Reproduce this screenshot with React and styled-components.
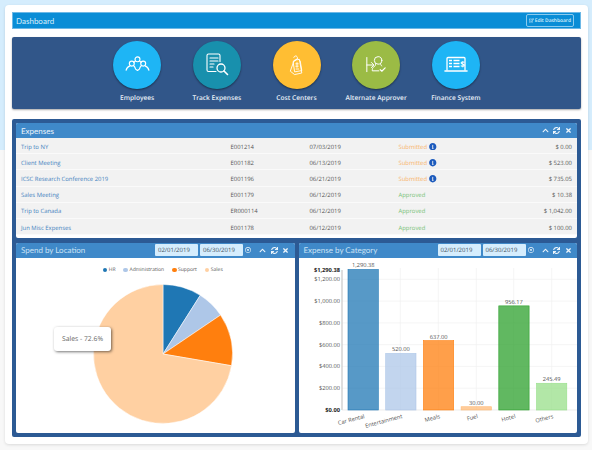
import React from 'react';
import styled, { createGlobalStyle } from 'styled-components';
import { FaChevronUp, FaSync, FaTimes, FaInfoCircle, FaRegEdit, FaRegDotCircle } from 'react-icons/fa';

const GlobalStyle = createGlobalStyle`
  html, body {
    margin: 0;
    padding: 0;
  }
  body {
    font-family: "Open Sans", "Liberation Sans", sans-serif;
    text-rendering: geometricPrecision;
    background: linear-gradient(to bottom, #d5edfd 0, #d5edfd 150px, #f8f8f8 150px);
    height: 450px;
    overflow: hidden;
  }
`;

const Page = styled.div`
  padding: 5px 4px 6px 5px;
  height: 450px;
  box-sizing: border-box;
`;

const Card = styled.div`
  background: #fff;
  border-radius: 4px;
  height: 439px;
  box-sizing: border-box;
  padding: 7px;
  box-shadow: 0 1px 3px rgba(0, 0, 0, 0.12);
`;

const TopBar = styled.div`
  display: flex;
  align-items: center;
  justify-content: space-between;
  height: 17px;
  box-sizing: border-box;
  padding: 0 6px 0 3px;
  background: #0a8dd6;
  border: 1px solid #6db8e6;
  color: #d6eefb;
  font-family: Lato, "Open Sans", sans-serif;
  font-size: 8px;
`;

const EditButton = styled.div`
  display: flex;
  align-items: center;
  gap: 1px;
  height: 11px;
  padding: 0 2px;
  border: 1px solid #8ccbee;
  border-radius: 2px;
  color: #dff2fc;
  font-family: "Open Sans", sans-serif;
  font-size: 4.9px;
  font-weight: 600;
`;

const ShortcutPanel = styled.div`
  display: flex;
  justify-content: center;
  height: 72px;
  margin: 8px 0 10px;
  padding-top: 4px;
  box-sizing: border-box;
  background: #315689;
  border-radius: 2px;
  box-shadow: 0 1px 2px rgba(0, 0, 0, 0.35);
`;

const Shortcut = styled.div`
  display: flex;
  flex-direction: column;
  align-items: center;
  width: 79.7px;
`;

const Circle = styled.div`
  display: flex;
  align-items: center;
  justify-content: center;
  width: 48px;
  height: 48px;
  border-radius: 50%;
  background: ${p => p.$color};
  box-shadow: 0 1px 2px rgba(0, 0, 0, 0.45);
`;

const ShortcutLabel = styled.div`
  margin-top: 4px;
  color: #e8eff7;
  font-size: 6.6px;
  font-weight: 600;
  white-space: nowrap;
`;

const Board = styled.div`
  display: flex;
  flex-direction: column;
  gap: 5px;
  height: 318px;
  box-sizing: border-box;
  padding: 4px;
  background: #2c5a94;
  border-radius: 2px;
`;

const Panel = styled.div`
  display: flex;
  flex-direction: column;
  flex: ${p => (p.$grow ? 1 : 'none')};
  min-width: 0;
  background: #fff;
  border-radius: 2px;
  overflow: hidden;
`;

const PanelHead = styled.div`
  display: flex;
  align-items: center;
  height: 15px;
  flex: none;
  padding: 0 5.5px 0 5px;
  background: #3f89c9;
  color: ${p => (p.$bright ? '#eaf4fb' : '#c9e2f5')};
  font-family: Lato, "Open Sans", sans-serif;
  font-size: 8px;
`;

const PanelTitle = styled.div`
  flex: 1;
  white-space: nowrap;
`;

const DateBox = styled.div`
  width: 43px;
  height: 12px;
  line-height: 12px;
  margin-right: 2px;
  padding-left: 3px;
  box-sizing: border-box;
  background: #d5edfd;
  color: #44525e;
  font-family: "Open Sans", sans-serif;
  font-size: 6px;
  border-radius: 1px;
`;

const Tools = styled.div`
  display: flex;
  align-items: center;
  gap: 4.5px;
  margin-left: ${p => p.$gap || 0}px;
  color: #eef6fc;
  font-size: ${p => p.$size || 7}px;
`;

const Rows = styled.div`
  display: flex;
  flex-direction: column;
  padding-bottom: 2.8px;
`;

const Row = styled.div`
  display: grid;
  grid-template-columns: 209.5px 79px 89px 1fr auto;
  align-items: center;
  height: 16.2px;
  padding: 2px 5px 0 5px;
  box-sizing: border-box;
  background: #f2f2f2;
  border-bottom: 1px solid #fafafa;
  color: #555;
  font-size: 5.9px;
`;

const TripLink = styled.span`
  color: #4583c0;
`;

const Status = styled.span`
  display: flex;
  align-items: center;
  gap: 2px;
  color: ${p => (p.$approved ? '#78c278' : '#f8b36b')};
`;

const InfoDot = styled.span`
  display: flex;
  color: #1d5bbd;
  font-size: 7.5px;
`;

const Charts = styled.div`
  display: flex;
  flex: 1;
  gap: 4px;
  min-height: 0;
`;

const PieBody = styled.div`
  position: relative;
  display: flex;
  flex-direction: column;
  align-items: center;
  flex: 1;
  padding: 9px 0 0 15px;
`;

const Legend = styled.div`
  display: flex;
  align-items: center;
  height: 6px;
  gap: 8px;
  margin-bottom: 11px;
  color: #555;
  font-size: 5px;
`;

const LegendItem = styled.div`
  display: flex;
  align-items: center;
  gap: 1.5px;
`;

const LegendDot = styled.span`
  width: 4.5px;
  height: 4.5px;
  border-radius: 50%;
  background: ${p => p.$color};
`;

const PieTip = styled.div`
  position: absolute;
  left: 38px;
  top: 69px;
  width: 57px;
  height: 24px;
  line-height: 24px;
  text-align: center;
  box-sizing: border-box;
  background: #fff;
  border-radius: 3px;
  box-shadow: 1px 1px 3px rgba(0, 0, 0, 0.55);
  color: #666;
  font-size: 6.8px;
  white-space: nowrap;
`;

const BarBody = styled.div`
  flex: 1;
  line-height: 0;
`;

const expenses = [
  ['Trip to NY', 'E001214', '07/03/2019', 'Submitted', '$ 0.00'],
  ['Client Meeting', 'E001182', '06/13/2019', 'Submitted', '$ 523.00'],
  ['ICSC Research Conference 2019', 'E001196', '06/21/2019', 'Submitted', '$ 735.05'],
  ['Sales Meeting', 'E001179', '06/12/2019', 'Approved', '$ 10.38'],
  ['Trip to Canada', 'ER000114', '06/12/2019', 'Approved', '$ 1,042.00'],
  ['Jun Misc Expenses', 'E001178', '06/12/2019', 'Approved', '$ 100.00'],
];

const legend = [
  ['HR', '#1f77b4'],
  ['Administration', '#aec7e8'],
  ['Support', '#ff7f0e'],
  ['Sales', '#ffd0a2'],
];

const bars = [
  ['Car Rental', 1290.38, '1,290.38', '#1f77b4'],
  ['Entertainment', 520, '520.00', '#aec7e8'],
  ['Meals', 637, '637.00', '#ff7f0e'],
  ['Fuel', 30, '30.00', '#ffbb78'],
  ['Hotel', 956.17, '956.17', '#2ca02c'],
  ['Others', 245.49, '245.49', '#98df8a'],
];

const stroke = { fill: 'none', stroke: '#fff', strokeLinecap: 'round', strokeLinejoin: 'round' };

const EmployeesIcon = () => (
  <svg width="25" height="19" viewBox="0 0 26 20" {...stroke} strokeWidth="1.2">
    <circle cx="13" cy="3.5" r="2.6" />
    <circle cx="7" cy="8" r="2.6" />
    <circle cx="19" cy="8" r="2.6" />
    <path d="M10.6 5.5c-1 .4-1.4 1-1.5 1.4M15.4 5.5c1 .4 1.4 1 1.5 1.4" />
    <path d="M9 10.2c1 .8 1.6 2 2 3.6l2 1.4 2-1.4c.4-1.6 1-2.8 2-3.6" />
    <path d="M1 15c.6-2.4 2.2-4 4-4.6M25 15c-.6-2.4-2.2-4-4-4.6" />
  </svg>
);

const ExpensesIcon = () => (
  <svg width="24" height="24" viewBox="0 0 24 24" {...stroke} strokeWidth="1.1">
    <path d="M11 18.5H3.5A1.5 1.5 0 0 1 2 17V2.5A1.5 1.5 0 0 1 3.5 1h10A1.5 1.5 0 0 1 15 2.5v6" />
    <path d="M5 5h8M5 8h8M5 11h4M5 14h3" strokeWidth="1.2" />
    <circle cx="16" cy="15" r="4" strokeWidth="1.3" />
    <path d="M19 18l3.5 3.5" strokeWidth="1.6" />
  </svg>
);

const CostIcon = () => (
  <svg width="16" height="22" viewBox="0 0 20 26" {...stroke} strokeWidth="1.1">
    <path d="M7 7l6-1 3 17-9 2-5-4z" />
    <path d="M6 3.5c.5-2 3-2.5 4-1 1 1 .5 2.5-.5 3.5L7 8" />
    <path d="M5.5 8.5L11 5l3 3 2 12-8.5 1.5z" />
    <path d="M10 10v6M8.5 11.5h3M8.5 14.5h3M9 18h3" />
  </svg>
);

const ApproverIcon = () => (
  <svg width="22" height="20" viewBox="0 0 26 24" {...stroke} strokeWidth="1.2">
    <path d="M2 3v17M2 12h8M7.5 9l3 3-3 3" />
    <circle cx="15.5" cy="6.5" r="4.5" />
    <path d="M12.5 10.5c0 2-.5 3-2.5 4-1 .6-1.5 2-1.5 4.5h8" />
    <path d="M18.5 10.5c0 1.2.5 2 1.5 2.8" />
    <path d="M18 17.5l2 2 4-4" strokeWidth="1.4" />
  </svg>
);

const FinanceIcon = () => (
  <svg width="24" height="18" viewBox="0 0 24 18" {...stroke} strokeWidth="1.3">
    <path d="M3 14V2.5A1 1 0 0 1 4 1.5h16a1 1 0 0 1 1 1V14" />
    <path d="M1 15h22" strokeWidth="1.6" />
    <path d="M5 4.5h3M9.5 4.5h6M5 7.5h3M9.5 7.5h6M5 10.5h3M9.5 10.5h6" strokeWidth="1.4" strokeLinecap="butt" />
    <text x="16.3" y="11" fill="#fff" stroke="none" fontSize="8" fontWeight="700" fontFamily="Open Sans, sans-serif">$</text>
  </svg>
);

const shortcuts = [
  ['Employees', '#1eb5f5', <EmployeesIcon />],
  ['Track Expenses', '#1890ad', <ExpensesIcon />],
  ['Cost Centers', '#ffbe33', <CostIcon />],
  ['Alternate Approver', '#9bbb45', <ApproverIcon />],
  ['Finance System', '#1eb5f5', <FinanceIcon />],
];

const PanelTools = ({ gap }) => (
  <Tools $gap={gap}>
    <FaChevronUp />
    <FaSync />
    <FaTimes />
  </Tools>
);

const DateTools = () => (
  <>
    <DateBox>02/01/2019</DateBox>
    <DateBox>06/30/2019</DateBox>
    <Tools $size={6}>
      <FaRegDotCircle />
    </Tools>
  </>
);

// slice from angle a to angle b, degrees clockwise from the top
const slice = (a, b, r = 69.5, c = 70) => {
  const pt = d => [c + r * Math.sin((d * Math.PI) / 180), c - r * Math.cos((d * Math.PI) / 180)];
  const [x1, y1] = pt(a);
  const [x2, y2] = pt(b);
  return `M${c} ${c}L${x1} ${y1}A${r} ${r} 0 ${b - a > 180 ? 1 : 0} 1 ${x2} ${y2}Z`;
};

const PieChart = () => (
  <svg width="140" height="140" viewBox="0 0 140 140">
    <path d={slice(0, 32.4)} fill="#1f77b4" stroke="#fff" strokeWidth="0.5" />
    <path d={slice(32.4, 55.9)} fill="#aec7e8" stroke="#fff" strokeWidth="0.5" />
    <path d={slice(55.9, 99.7)} fill="#ff7f0e" stroke="#fff" strokeWidth="0.5" />
    <path d={slice(99.7, 360)} fill="#ffd0a2" stroke="#fff" strokeWidth="0.5" />
  </svg>
);

const BarChart = () => {
  const base = 152;
  const scale = 0.1089;
  const ticks = [0, 200, 400, 600, 800, 1000, 1200];
  const font = 'Open Sans, sans-serif';
  return (
    <svg width="278" height="174" viewBox="0 0 278 174" fontFamily={font}>
      {ticks.slice(1).map(t => (
        <line key={t} x1="43" x2="279" y1={base - t * scale} y2={base - t * scale} stroke="#f1f1f1" strokeWidth="0.7" />
      ))}
      {[101.3, 139.3, 177.3, 214.7, 252.7].map(x => (
        <line key={x} x1={x} x2={x} y1="10" y2={base} stroke="#f1f1f1" strokeWidth="0.7" />
      ))}
      <line x1="43" x2="43" y1="12" y2={base} stroke="#c8c8c8" strokeWidth="1.2" />
      <line x1="43" x2="279" y1={base} y2={base} stroke="#e4e4e4" strokeWidth="0.7" />
      {ticks.map(t => (
        <text key={t} x="41" y={base - t * scale + 2} textAnchor="end" fontSize="5.7" fill={t === 0 ? '#222' : '#555'} fontWeight={t === 0 ? 700 : 400}>
          ${t === 0 ? '0.00' : t.toLocaleString('en-US') + '.00'}
        </text>
      ))}
      <text x="41" y="14" textAnchor="end" fontSize="5.7" fill="#222" fontWeight="700">$1,290.38</text>
      {bars.map(([name, value, label, color], i) => {
        const x = 49 + i * 37.7;
        const h = value * scale;
        return (
          <g key={name}>
            <rect x={x} y={base - h} width="30.3" height={h} fill={color} fillOpacity="0.75" stroke={color} strokeWidth="0.6" />
            <text x={x + 15.2} y={base - h - 2} textAnchor="middle" fontSize="5.7" fill="#555">{label}</text>
            <text transform={`translate(${x + 17} 160) rotate(-15)`} textAnchor="end" fontSize="5.7" fill="#555">{name}</text>
          </g>
        );
      })}
    </svg>
  );
};

const App = () => (
  <Page>
    <GlobalStyle />
    <Card>
      <TopBar>
        <span>Dashboard</span>
        <EditButton><FaRegEdit /> Edit Dashboard</EditButton>
      </TopBar>

      <ShortcutPanel>
        {shortcuts.map(([label, color, icon]) => (
          <Shortcut key={label}>
            <Circle $color={color}>{icon}</Circle>
            <ShortcutLabel>{label}</ShortcutLabel>
          </Shortcut>
        ))}
      </ShortcutPanel>

      <Board>
        <Panel>
          <PanelHead $bright>
            <PanelTitle>Expenses</PanelTitle>
            <PanelTools />
          </PanelHead>
          <Rows>
            {expenses.map(([name, id, date, status, amount]) => (
              <Row key={id}>
                <TripLink>{name}</TripLink>
                <span>{id}</span>
                <span>{date}</span>
                <Status $approved={status === 'Approved'}>
                  {status}
                  {status === 'Submitted' && <InfoDot><FaInfoCircle /></InfoDot>}
                </Status>
                <span>{amount}</span>
              </Row>
            ))}
          </Rows>
        </Panel>

        <Charts>
          <Panel $grow>
            <PanelHead>
              <PanelTitle>Spend by Location</PanelTitle>
              <DateTools />
              <PanelTools gap={8} />
            </PanelHead>
            <PieBody>
              <Legend>
                {legend.map(([name, color]) => (
                  <LegendItem key={name}>
                    <LegendDot $color={color} />
                    {name}
                  </LegendItem>
                ))}
              </Legend>
              <PieChart />
              <PieTip>Sales - 72.6%</PieTip>
            </PieBody>
          </Panel>

          <Panel $grow>
            <PanelHead>
              <PanelTitle>Expense by Category</PanelTitle>
              <DateTools />
              <PanelTools gap={8} />
            </PanelHead>
            <BarBody>
              <BarChart />
            </BarBody>
          </Panel>
        </Charts>
      </Board>
    </Card>
  </Page>
);

export default App;
